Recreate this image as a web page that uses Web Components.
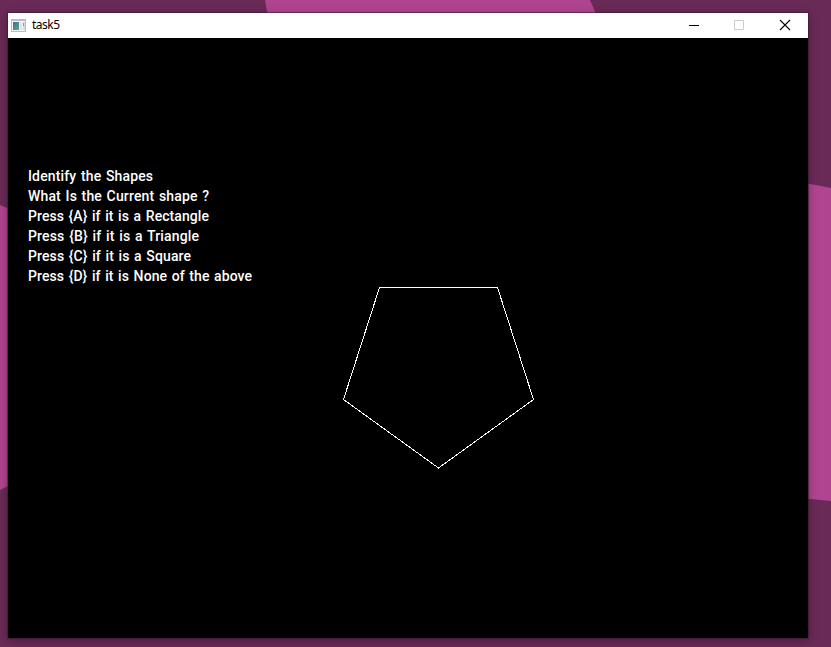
<!DOCTYPE html>
<html lang="en"><head><meta charset="utf-8"><title>task5</title>
<style>html,body{margin:0;height:100%;overflow:hidden}</style></head>
<body><desk-top><app-window><title-bar slot="bar">task5</title-bar><shape-canvas>
<quiz-line width="125">Identify the Shapes</quiz-line>
<quiz-line width="181">What Is the Current shape ?</quiz-line>
<quiz-line width="181">Press {A} if it is a Rectangle</quiz-line>
<quiz-line width="171">Press {B} if it is a Triangle</quiz-line>
<quiz-line width="163">Press {C} if it is a Square</quiz-line>
<quiz-line width="224">Press {D} if it is None of the above</quiz-line>
</shape-canvas></app-window></desk-top>
<script>
const define = (name, html, ready) => customElements.define(name, class extends HTMLElement {
  connectedCallback() {
    if (this.shadowRoot) return;
    this.attachShadow({ mode: 'open' }).innerHTML = html;
    if (ready) ready(this);
  }
});

define('desk-top', `<style>
:host{display:block;position:relative;box-sizing:border-box;width:831px;height:647px;padding:13px 23px 9px 8px;background:#6a2a57;overflow:hidden}
.wall{position:absolute;inset:0}
::slotted(*){position:relative}
</style>
<svg class="wall" width="831" height="647"><g fill="#b14490">
<path d="M265 0H590L597 16H268z"/><path d="M0 205L12 210V484L0 490z"/><path d="M800 182L831 188V501L800 498z"/></g></svg>
<slot></slot>`);

define('app-window', `<style>
:host{display:flex;flex-direction:column;width:800px;height:625px;background:#000;box-shadow:0 0 0 1px rgba(50,25,45,.55),0 2px 9px rgba(0,0,0,.35)}
</style><slot name="bar"></slot><slot></slot>`);

define('title-bar', `<style>
:host{display:flex;align-items:center;height:25px;flex:none;background:#fff;color:#000;font:12px/23px "Noto Sans","Open Sans",sans-serif}
.app{margin:0 5px 0 3px;flex:none}
.name{flex:1;height:25px;letter-spacing:-.5px}
.btn{width:45px;height:25px;flex:none}
.btn:last-child{width:47px}
</style>
<svg class="app" width="16" height="14"><defs><linearGradient id="g" x2="1" y2="1"><stop stop-color="#3e6da5"/><stop offset="1" stop-color="#58aa82"/></linearGradient></defs>
<path fill="#b9bdc4" d="M0 0h15v13H0z"/><path fill="#f5f5f5" d="M1 2h13v10H1z"/><path fill="url(#g)" d="M2 3h6v8H2z"/><path fill="#e0e2e5" d="M9 3h2v8H9z"/><path fill="#d5dce1" d="M12 3h2v8h-2z"/><path fill="#6aaa95" d="M12 4h1v3h-1z"/></svg>
<span class="name"><slot></slot></span>
<svg class="btn" shape-rendering="crispEdges"><path d="M18 12h10v1H18z"/></svg>
<svg class="btn"><path d="M18.5 7.5h9v9h-9z" fill="none" stroke="#ccc"/></svg>
<svg class="btn"><path d="M19 7l10 10M29 7L19 17" fill="none" stroke="#000" stroke-width="1.1"/></svg>`);

define('shape-canvas', `<style>
:host{display:block;position:relative;box-sizing:border-box;flex:1;padding:128px 20px 0;background:#000}
svg{position:absolute;left:0;top:0}
</style><slot></slot>
<svg width="800" height="600" shape-rendering="crispEdges"><path d="M371.5 249.5H489.5L525.5 361.5L430.5 430L335.5 361.5z" fill="none" stroke="#fff"/></svg>`);

define('quiz-line', `<style>
:host{display:block;height:20px;color:#fff;font:500 14px/20px Roboto,sans-serif;word-spacing:1px;white-space:nowrap}
span{display:inline-block}
</style><span></span>`, el => {
  const line = el.shadowRoot.querySelector('span');
  line.textContent = el.textContent;
  const natural = line.getBoundingClientRect().width;
  line.style.letterSpacing = (el.getAttribute('width') - natural) / (el.textContent.length - 1) + 'px';
});
</script></body></html>
